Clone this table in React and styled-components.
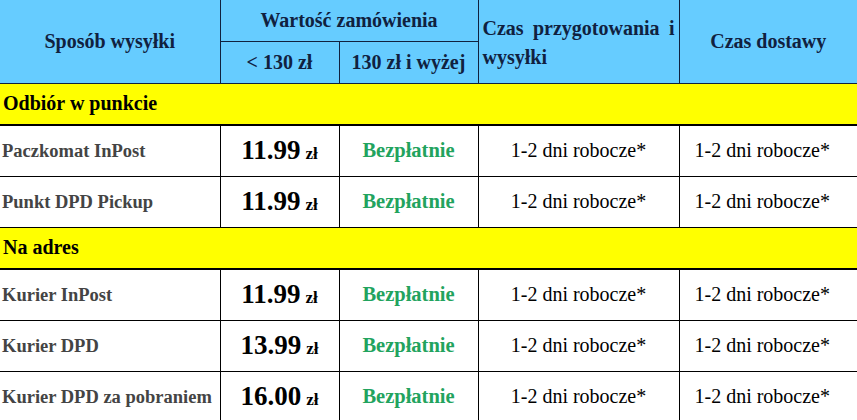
import React from "react";
import styled, { createGlobalStyle } from "styled-components";

const SERIF = `"Liberation Serif", "Times New Roman", serif`;

const Global = createGlobalStyle`
  html, body { margin: 0; padding: 0; background: #fff; }
  body { font-family: ${SERIF}; overflow: hidden; }
`;

const Table = styled.table`
  border-collapse: collapse;
  table-layout: fixed;
  width: 857px;
  font-family: ${SERIF};
`;

const HeadCell = styled.th`
  background: #66ccff;
  color: #10213f;
  font-family: ${SERIF};
  font-weight: bold;
  font-size: ${(p) => p.$size || 20}px;
  text-align: ${(p) => p.$align || "center"};
  text-align-last: ${(p) => (p.$align === "justify" ? "left" : "auto")};
  vertical-align: middle;
  padding: ${(p) => p.$padT || 0}px 4px 0;
  height: ${(p) => p.$h || 41}px;
  border-left: ${(p) => (p.$noLeft ? "none" : "1px solid #10213f")};
  border-bottom: 1px solid #10213f;
  line-height: ${(p) => p.$lh || 1.2};
  box-sizing: border-box;
`;

const GroupCell = styled.td`
  background: #ffff00;
  color: #000;
  font-family: ${SERIF};
  font-weight: bold;
  font-size: 20px;
  height: 42px;
  padding: 0 3px;
  border-bottom: 2px solid #000;
  box-sizing: border-box;
`;

const Row = styled.tr`
  height: 51px;
`;

const Cell = styled.td`
  border-left: ${(p) => (p.$noLeft ? "none" : "1px solid #000")};
  border-bottom: 1px solid #000;
  text-align: ${(p) => p.$align || "center"};
  vertical-align: middle;
  padding: ${(p) => (p.$align === "left" ? "0 0 0 2px" : `0 ${p.$padR || 0}px 0 0`)};
  font-family: ${SERIF};
  font-size: 20px;
  color: #000;
  white-space: nowrap;
  box-sizing: border-box;
`;

const Name = styled.span`
  font-weight: bold;
  font-size: 18.5px;
  color: #444;
`;

const Price = styled.span`
  font-weight: bold;
  font-size: 27px;
  color: #000;
`;

const Currency = styled.span`
  font-weight: bold;
  font-size: 17px;
  margin-left: 5px;
`;

const Free = styled.span`
  font-weight: bold;
  font-size: 20.5px;
  color: #22a35e;
`;

const groups = [
  {
    title: "Odbiór w punkcie",
    rows: [
      { name: "Paczkomat InPost", price: "11.99" },
      { name: "Punkt DPD Pickup", price: "11.99" },
    ],
  },
  {
    title: "Na adres",
    rows: [
      { name: "Kurier InPost", price: "11.99" },
      { name: "Kurier DPD", price: "13.99" },
      { name: "Kurier DPD za pobraniem", price: "16.00" },
    ],
  },
];

export default function App() {
  return (
    <>
      <Global />
      <Table>
        <colgroup>
          <col style={{ width: 220 }} />
          <col style={{ width: 119 }} />
          <col style={{ width: 139 }} />
          <col style={{ width: 201 }} />
          <col style={{ width: 178 }} />
        </colgroup>
        <thead>
          <tr>
            <HeadCell rowSpan={2} $noLeft>
              Sposób wysyłki
            </HeadCell>
            <HeadCell colSpan={2}>Wartość zamówienia</HeadCell>
            <HeadCell rowSpan={2} $align="justify" $lh={1.45} $padT={4}>
              Czas przygotowania i wysyłki
            </HeadCell>
            <HeadCell rowSpan={2}>Czas dostawy</HeadCell>
          </tr>
          <tr>
            <HeadCell $h={42}>&lt; 130 zł</HeadCell>
            <HeadCell $h={42}>130 zł i wyżej</HeadCell>
          </tr>
        </thead>
        <tbody>
          {groups.map((g) => (
            <React.Fragment key={g.title}>
              <tr>
                <GroupCell colSpan={5}>{g.title}</GroupCell>
              </tr>
              {g.rows.map((r) => (
                <Row key={r.name}>
                  <Cell $noLeft $align="left">
                    <Name>{r.name}</Name>
                  </Cell>
                  <Cell>
                    <Price>{r.price}</Price>
                    <Currency>zł</Currency>
                  </Cell>
                  <Cell>
                    <Free>Bezpłatnie</Free>
                  </Cell>
                  <Cell>1-2 dni robocze*</Cell>
                  <Cell $padR={12}>1-2 dni robocze*</Cell>
                </Row>
              ))}
            </React.Fragment>
          ))}
        </tbody>
      </Table>
    </>
  );
}
